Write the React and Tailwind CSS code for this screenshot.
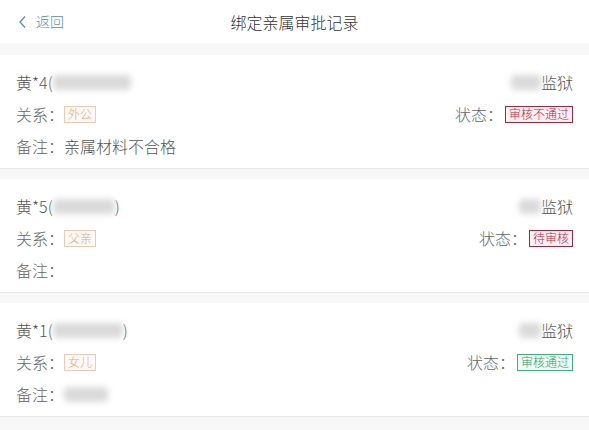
import React from "react";

const records = [
  {
    prefix: "黄*4(",
    blurW: "w-[78px]",
    close: "",
    prison: "w-[30px]",
    relation: "外公",
    status: "审核不通过",
    tone: "red",
    note: "亲属材料不合格",
  },
  {
    prefix: "黄*5(",
    blurW: "w-[62px]",
    close: ")",
    prison: "w-[22px]",
    relation: "父亲",
    status: "待审核",
    tone: "red",
    note: "",
  },
  {
    prefix: "黄*1(",
    blurW: "w-[70px]",
    close: ")",
    prison: "w-[22px]",
    relation: "女儿",
    status: "审核通过",
    tone: "green",
    note: "blur",
  },
];

const Blur = ({ className }) => (
  <span className={`inline-block h-[15px] bg-[#dadada] blur-[3px] rounded-sm ${className}`} />
);

const StatusTag = ({ tone, children }) =>
  tone === "green" ? (
    <span className="inline-flex items-center h-[17px] px-[3px] text-[12px] leading-none border border-[#3fae7c] text-[#2f9e6a] bg-[#eefaf3]">
      {children}
    </span>
  ) : (
    <span className="inline-flex items-center h-[17px] px-[3px] text-[12px] leading-none border border-[#a3263d] text-[#b8203e] bg-[#fdf0f3]">
      {children}
    </span>
  );

const RecordCard = ({ r }) => (
  <div className="bg-white border-b border-[#e8e8e8] px-4 pt-[11px] pb-[6px] text-[16px] font-light">
    <div className="flex items-center justify-between h-[32px]">
      <div className="flex items-center text-[#555]">
        <span>{r.prefix}</span>
        <Blur className={r.blurW} />
        <span>{r.close}</span>
      </div>
      <div className="flex items-center text-[#555]">
        <Blur className={r.prison} />
        <span>监狱</span>
      </div>
    </div>
    <div className="flex items-center justify-between h-[32px]">
      <div className="flex items-center text-[#666]">
        <span>关系：</span>
        <span className="inline-flex items-center h-[17px] px-[3px] text-[12px] leading-none border border-[#efc9b4] text-[#e7a57f] bg-[#fffaf6]">
          {r.relation}
        </span>
      </div>
      <div className="flex items-center text-[#666]">
        <span className="mr-[2px]">状态：</span>
        <StatusTag tone={r.tone}>{r.status}</StatusTag>
      </div>
    </div>
    <div className="flex items-center h-[32px] text-[#666]">
      <span>备注：</span>
      {r.note === "blur" ? <Blur className="w-[44px]" /> : <span className="text-[#555]">{r.note}</span>}
    </div>
  </div>
);

export default function App() {
  return (
    <div
      className="w-[589px] h-[430px] overflow-hidden bg-[#f8f8f8]"
      style={{ fontFamily: '"Noto Sans CJK SC", "Liberation Sans", sans-serif' }}
    >
      <div className="relative h-[43px] bg-white flex items-center justify-center">
        <div className="absolute left-[18px] top-0 h-full flex items-center text-[#5a8fb3] text-[14px] font-light">
          <svg width="10" height="14" viewBox="0 0 10 14" className="mr-[8px]">
            <path d="M7 1.5 L2 7 L7 12.5" fill="none" stroke="#5a8fb3" strokeWidth="1.3" />
          </svg>
          <span>返回</span>
        </div>
        <span className="text-[16px] text-[#333] font-light">绑定亲属审批记录</span>
      </div>
      <div className="mt-[12px] flex flex-col gap-[10px]">
        {records.map((r, i) => (
          <RecordCard key={i} r={r} />
        ))}
      </div>
    </div>
  );
}
